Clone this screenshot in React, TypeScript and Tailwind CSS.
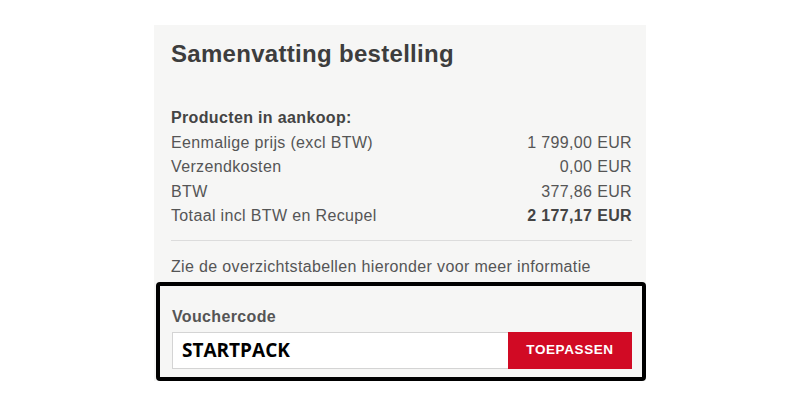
import React from "react";

const rows = [
  { label: "Eenmalige prijs (excl BTW)", value: "1 799,00 EUR" },
  { label: "Verzendkosten", value: "0,00 EUR" },
  { label: "BTW", value: "377,86 EUR" },
];

const App: React.FC = () => {
  return (
    <div className="w-[800px] h-[400px] bg-white flex justify-center font-['Liberation_Sans',Arial,sans-serif]">
      <div className="w-[492px] mt-[25px] self-start bg-[#f6f6f5] pl-[17px] pr-[14px] pt-[14px] text-[#555] tracking-[0.35px]">
        <h1 className="text-[24px] leading-[30px] font-bold text-[#3d3d3d] tracking-[0.3px]">Samenvatting bestelling</h1>

        {/* order lines */}
        <div className="mt-[37px] text-[16px] leading-[24.5px]">
          <div className="font-bold text-[#444]">Producten in aankoop:</div>
          {rows.map((r) => (
            <div key={r.label} className="flex justify-between">
              <span>{r.label}</span>
              <span>{r.value}</span>
            </div>
          ))}
          <div className="flex justify-between">
            <span>Totaal incl BTW en Recupel</span>
            <span className="font-bold text-[#444]">2 177,17 EUR</span>
          </div>
        </div>

        <div className="mt-[11px] h-px bg-[#dcdcdc]"></div>

        <p className="mt-[14px] text-[16px] leading-[24.5px]">Zie de overzichtstabellen hieronder voor meer informatie</p>

        {/* voucher block, outlined */}
        <div className="mt-[3px] -ml-[15px] -mr-[14px] border-[4px] border-black rounded-[4px] pl-[12px] pr-[10px] pt-[19px] pb-[8px]">
          <div className="text-[16px] leading-[24px] font-bold text-[#555]">Vouchercode</div>
          <div className="mt-[3px] flex h-[37px]">
            <div className="flex-1 bg-white border border-[#d4d4d4] border-r-0 flex items-center pl-[9px] font-['Open_Sans',sans-serif] font-bold text-[19px] tracking-normal text-black">
              STARTPACK
            </div>
            <button className="w-[124px] bg-[#d10a24] text-white text-[13.5px] font-bold tracking-[0.6px]">TOEPASSEN</button>
          </div>
        </div>
      </div>
    </div>
  );
};

export default App;
